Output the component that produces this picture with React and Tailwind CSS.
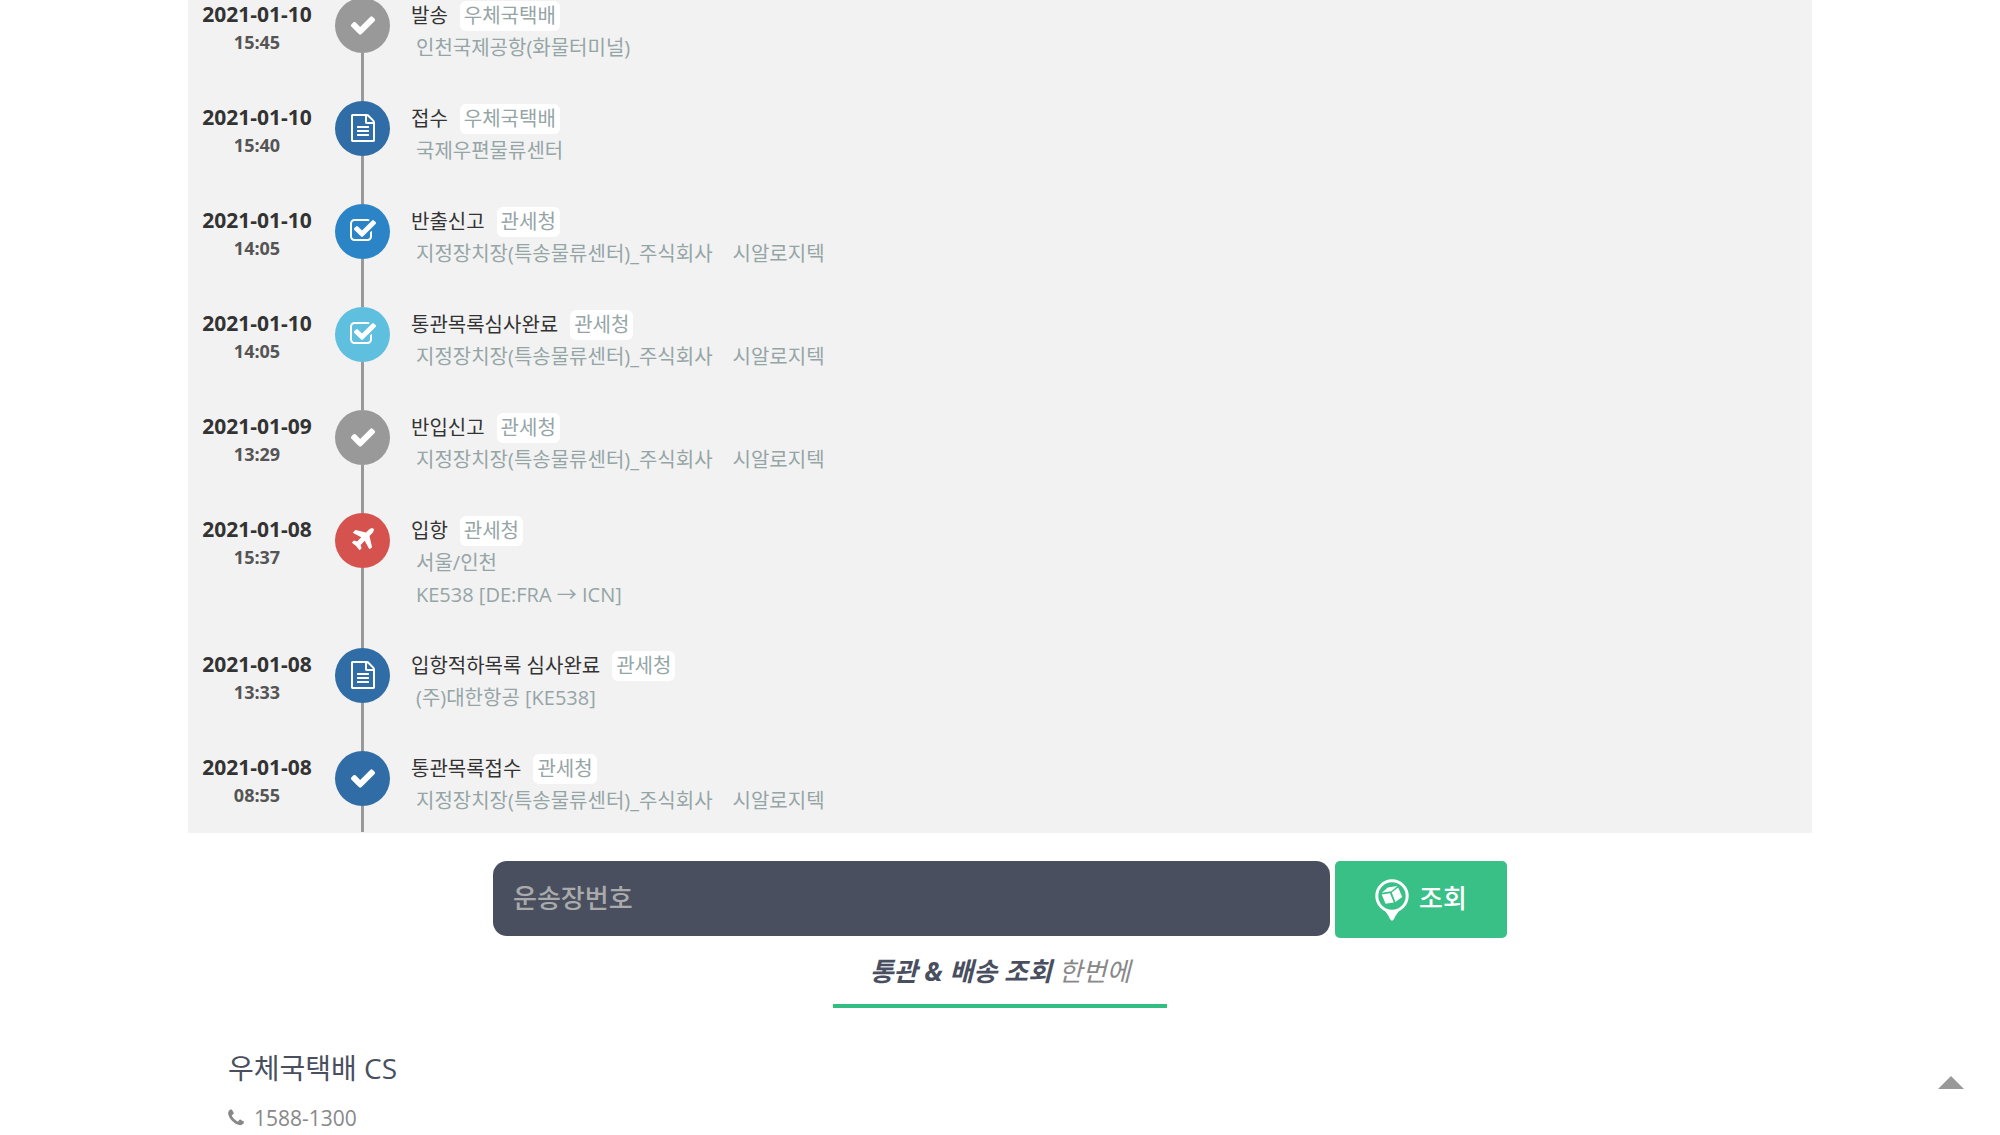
import React, { useState } from "react";

const icons = {
  check:
    "M1671 566q0 40-28 68l-724 724-136 136q-28 28-68 28t-68-28l-136-136-362-362q-28-28-28-68t28-68l136-136q28-28 68-28t68 28l294 295 656-657q28-28 68-28t68 28l136 136q28 28 28 68z",
  checkSquare:
    "M1472 930v318q0 119-84.5 203.5t-203.5 84.5h-832q-119 0-203.5-84.5t-84.5-203.5v-832q0-119 84.5-203.5t203.5-84.5h832q63 0 117 25 15 7 18 23 3 17-9 29l-49 49q-10 10-23 10-3 0-9-2-23-6-45-6h-832q-66 0-113 47t-47 113v832q0 66 47 113t113 47h832q66 0 113-47t47-113v-254q0-13 9-22l64-64q10-10 23-10 6 0 12 3 20 8 20 29zm231-489l-814 814q-24 24-57 24t-57-24l-430-430q-24-24-24-57t24-57l110-110q24-24 57-24t57 24l263 263 647-647q24-24 57-24t57 24l110 110q24 24 24 57t-24 57z",
  file:
    "M1596 380q28 28 48 76t20 88v1152q0 40-28 68t-68 28h-1344q-40 0-68-28t-28-68v-1600q0-40 28-68t68-28h896q40 0 88 20t76 48zm-444-244v376h376q-10-29-22-41l-313-313q-12-12-41-22zm384 1528v-1024h-416q-40 0-68-28t-28-68v-416h-768v1536h1280zm-1024-864q0-14 9-23t23-9h704q14 0 23 9t9 23v64q0 14-9 23t-23 9h-704q-14 0-23-9t-9-23v-64zm736 224q14 0 23 9t9 23v64q0 14-9 23t-23 9h-704q-14 0-23-9t-9-23v-64q0-14 9-23t23-9h704zm0 256q14 0 23 9t9 23v64q0 14-9 23t-23 9h-704q-14 0-23-9t-9-23v-64q0-14 9-23t23-9h704z",
  plane:
    "M1568 160q44 52 12 148t-108 172l-161 161 160 696q5 19-12 33l-128 96q-7 6-19 6-4 0-7-1-15-3-21-14l-279-508-259 259 53 194q5 17-8 31l-96 96q-9 9-23 9h-2q-15-2-24-13l-189-252-252-189q-11-7-13-23-1-13 9-25l96-97q9-9 23-9 6 0 8 1l194 53 259-259-508-279q-14-8-17-24-2-16 9-27l128-128q14-13 30-8l665 159 160-160q76-76 172-108t148 12z",
  phone:
    "M1600 1240q0 27-10 70.5t-21 68.5q-21 50-122 106-94 51-186 51-27 0-53-3.5t-57.5-12.5-47-14.5-55.5-20.5-49-18q-98-35-175-83-127-79-264-216t-216-264q-48-77-83-175-3-9-18-49t-20.5-55.5-14.5-47-12.5-57.5-3.5-53q0-92 51-186 56-101 106-122 25-11 68.5-21t70.5-10q14 0 21 3 18 6 53 76 11 19 30 54t35 63.5 31 53.5q3 4 17.5 25t21.5 35.5 7 28.5q0 20-28.5 50t-62 55-62 53-28.5 46q0 9 5 22.5t8.5 20.5 14 24 11.5 19q76 137 174 235t235 174q2 1 19 11.5t24 14 20.5 8.5 22.5 5q18 0 46-28.5t53-62 55-62 50-28.5q14 0 28.5 7t35.5 21.5 25 17.5q25 15 53.5 31t63.5 35 54 30q70 35 76 53 3 7 3 21z",
};

const events = [
  { date: "2021-01-10", time: "15:45", icon: "check", color: "bg-[#999999]", title: "발송", org: "우체국택배", lines: ["인천국제공항(화물터미널)"] },
  { date: "2021-01-10", time: "15:40", icon: "file", color: "bg-[#306ca5]", title: "접수", org: "우체국택배", lines: ["국제우편물류센터"] },
  { date: "2021-01-10", time: "14:05", icon: "checkSquare", color: "bg-[#2a84c6]", title: "반출신고", org: "관세청", lines: ["지정장치장(특송물류센터)_주식회사　시알로지텍"] },
  { date: "2021-01-10", time: "14:05", icon: "checkSquare", color: "bg-[#5fbfde]", title: "통관목록심사완료", org: "관세청", lines: ["지정장치장(특송물류센터)_주식회사　시알로지텍"] },
  { date: "2021-01-09", time: "13:29", icon: "check", color: "bg-[#999999]", title: "반입신고", org: "관세청", lines: ["지정장치장(특송물류센터)_주식회사　시알로지텍"] },
  { date: "2021-01-08", time: "15:37", icon: "plane", color: "bg-[#d6524e]", title: "입항", org: "관세청", lines: ["서울/인천", "KE538 [DE:FRA → ICN]"] },
  { date: "2021-01-08", time: "13:33", icon: "file", color: "bg-[#306ca5]", title: "입항적하목록 심사완료", org: "관세청", lines: ["(주)대한항공 [KE538]"] },
  { date: "2021-01-08", time: "08:55", icon: "check", color: "bg-[#306ca5]", title: "통관목록접수", org: "관세청", lines: ["지정장치장(특송물류센터)_주식회사　시알로지텍"] },
];

function Icon({ name, className }) {
  return (
    <svg viewBox="0 0 1792 1792" fill="currentColor" aria-hidden="true" className={className}>
      <path d={icons[name]} />
    </svg>
  );
}

function ParcelPin() {
  return (
    <svg viewBox="0 0 34 42" aria-hidden="true" className="h-[42px] w-[34px] shrink-0">
      <path d="M5 27 Q12 33 15 40 Q17 43.5 19 40 Q22 33 29 27 Z" fill="#fff" />
      <circle cx="17" cy="17" r="15.2" fill="#38c086" stroke="#fff" strokeWidth="3" />
      <path
        d="M6.8 13.8 L12.8 8.4 L22.4 7 L16.4 12.3 Z M6.7 15.4 L15 14.3 L18.8 23.4 L10.6 24.8 Z M16.8 13.6 L23.2 8.4 L27.2 18 L20.4 22.9 Z"
        fill="#fff"
      />
    </svg>
  );
}

function TimelineItem({ event }) {
  return (
    <li className="group flex">
      <div className="w-[138px] shrink-0 text-center font-bold">
        <div className="text-[21px] leading-8 text-[#333333]">{event.date}</div>
        <div className="text-lg leading-6 text-[#555555]">{event.time}</div>
      </div>
      <div className="ml-[9px] flex w-[55px] shrink-0 flex-col items-center">
        <div className={`flex size-[55px] items-center justify-center rounded-full pb-0.5 text-white ${event.color}`}>
          <Icon name={event.icon} className="size-7" />
        </div>
        <div className="w-[3px] grow bg-[#999999]" />
      </div>
      <div className="ml-[21px] pb-[37px] text-xl leading-8 text-[#95a5a6] group-last:pb-[15px]">
        <div className="flex items-center gap-3 pt-0.5">
          <span className="text-[#333333]">{event.title}</span>
          <span className="rounded-md bg-white px-1 leading-[30px]">{event.org}</span>
        </div>
        {event.lines.map((line) => (
          <div key={line} className="pl-[5px]">
            {line}
          </div>
        ))}
      </div>
    </li>
  );
}

function App() {
  const [number, setNumber] = useState("");

  return (
    <div className="bg-white font-['Open_Sans','Noto_Sans_CJK_KR',sans-serif]">
      <main className="-mt-0.5 px-47">
        <section className="bg-[#f2f2f2] pb-px">
          <ol>
            {events.map((event, i) => (
              <TimelineItem key={i} event={event} />
            ))}
          </ol>
        </section>

        <form
          onSubmit={(e) => e.preventDefault()}
          className="mx-auto mt-7 flex max-w-[1014px] items-start gap-[5px] text-[26px] font-medium"
        >
          <input
            type="text"
            aria-label="운송장번호"
            placeholder="운송장번호"
            value={number}
            onChange={(e) => setNumber(e.target.value)}
            className="h-[75px] min-w-0 grow rounded-[14px] bg-[#494f5f] px-5 pb-0.5 text-white placeholder:text-[#aaaaaa]"
          />
          <button
            type="submit"
            className="flex h-[77px] w-[172px] shrink-0 items-center justify-center gap-2.5 rounded-[5px] bg-[#38c086] text-white"
          >
            <ParcelPin />
            <span className="pb-0.5">조회</span>
          </button>
        </form>

        <div className="mx-auto mt-3 w-[334px] border-b-4 border-[#32be83] pb-3 text-center text-[26px] leading-[42px] text-[#888888] italic">
          <strong className="font-bold text-[#494f5f]">통관 &amp; 배송 조회</strong> 한번에
        </div>

        <section className="mt-10 pl-10">
          <h2 className="text-[28px] leading-10 text-[#494f5f]">우체국택배 CS</h2>
          <p className="mt-3.5 -ml-0.5 flex items-center gap-2 text-[21px] leading-8 text-[#888888]">
            <Icon name="phone" className="size-5" />
            <a href="tel:1588-1300">1588-1300</a>
          </p>
        </section>
      </main>

      <button type="button" aria-label="맨 위로" className="fixed right-9 bottom-[46px] text-[#999999]">
        <svg viewBox="0 0 26 13" fill="currentColor" className="h-[13px] w-[26px]">
          <path d="M13 0 L26 13 H0 Z" />
        </svg>
      </button>
    </div>
  );
}

export default App;
